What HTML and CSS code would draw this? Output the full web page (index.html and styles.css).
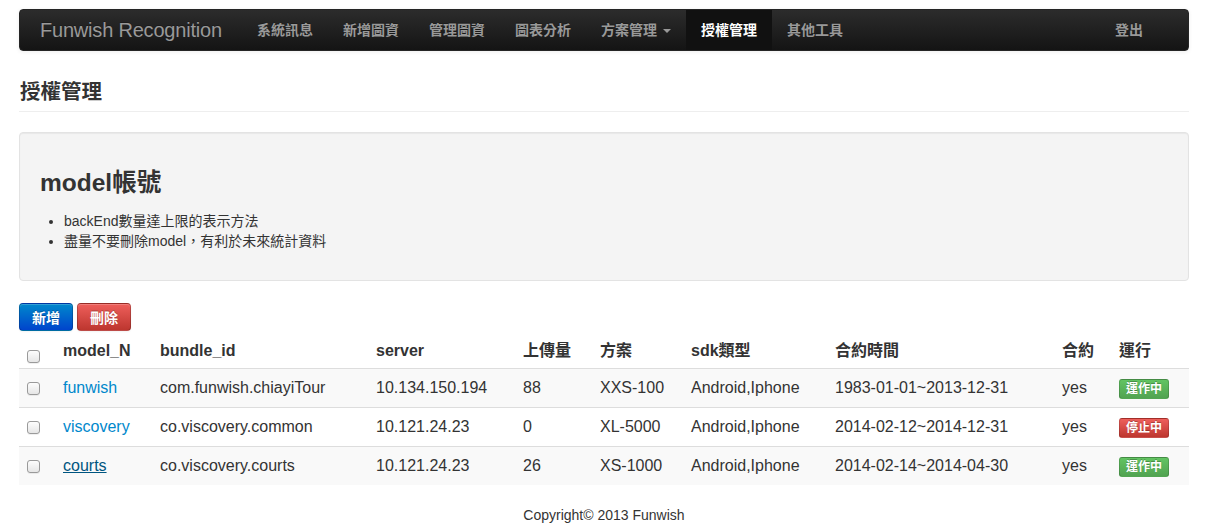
FILE: index.html
```html
<!DOCTYPE html>
<html lang="zh-Hant">
<head>
<meta charset="utf-8">
<title>授權管理</title>
<link rel="stylesheet" href="styles.css">
</head>
<body>
<div class="page">
  <div class="navbar">
    <a class="brand">Funwish Recognition</a>
    <ul class="nav">
      <li><a>系統訊息</a></li>
      <li><a>新增圖資</a></li>
      <li><a>管理圖資</a></li>
      <li><a>圖表分析</a></li>
      <li><a>方案管理 <b class="caret"></b></a></li>
      <li class="active"><a>授權管理</a></li>
      <li><a>其他工具</a></li>
    </ul>
    <ul class="nav nav-right">
      <li><a>登出</a></li>
    </ul>
  </div>

  <div class="page-header"><h3>授權管理</h3></div>

  <div class="well">
    <h2>model帳號</h2>
    <ul class="notes">
      <li>backEnd數量達上限的表示方法</li>
      <li>盡量不要刪除model，有利於未來統計資料</li>
    </ul>
  </div>

  <div class="actions">
    <button class="btn btn-primary">新增</button>
    <button class="btn btn-danger">刪除</button>
  </div>

  <table class="table">
    <colgroup>
      <col class="c-check"><col class="c-model"><col class="c-bundle"><col class="c-server"><col class="c-up"><col class="c-plan"><col class="c-sdk"><col class="c-date"><col class="c-contract"><col class="c-run">
    </colgroup>
    <thead>
      <tr>
        <th><input type="checkbox" class="cb cb-head"></th>
        <th>model_N</th>
        <th>bundle_id</th>
        <th>server</th>
        <th>上傳量</th>
        <th>方案</th>
        <th>sdk類型</th>
        <th>合約時間</th>
        <th>合約</th>
        <th>運行</th>
      </tr>
    </thead>
    <tbody>
      <tr>
        <td><input type="checkbox" class="cb"></td>
        <td><a class="link">funwish</a></td>
        <td>com.funwish.chiayiTour</td>
        <td>10.134.150.194</td>
        <td>88</td>
        <td>XXS-100</td>
        <td>Android,Iphone</td>
        <td>1983-01-01~2013-12-31</td>
        <td>yes</td>
        <td><span class="tag tag-on">運作中</span></td>
      </tr>
      <tr>
        <td><input type="checkbox" class="cb"></td>
        <td><a class="link">viscovery</a></td>
        <td>co.viscovery.common</td>
        <td>10.121.24.23</td>
        <td>0</td>
        <td>XL-5000</td>
        <td>Android,Iphone</td>
        <td>2014-02-12~2014-12-31</td>
        <td>yes</td>
        <td><span class="tag tag-off">停止中</span></td>
      </tr>
      <tr>
        <td><input type="checkbox" class="cb"></td>
        <td><a class="link link-hover">courts</a></td>
        <td>co.viscovery.courts</td>
        <td>10.121.24.23</td>
        <td>26</td>
        <td>XS-1000</td>
        <td>Android,Iphone</td>
        <td>2014-02-14~2014-04-30</td>
        <td>yes</td>
        <td><span class="tag tag-on">運作中</span></td>
      </tr>
    </tbody>
  </table>

  <footer class="footer">Copyright© 2013 Funwish</footer>
</div>
</body>
</html>
```

FILE: styles.css
```css
* { box-sizing: border-box; }
html, body { margin: 0; padding: 0; background: #fff; }
body {
  font-family: "Liberation Sans", Arial, "Noto Sans CJK TC", sans-serif;
  font-size: 14px;
  line-height: 20px;
  color: #333;
}
.page { padding: 9px 24px 0 19px; width: 1213px; }

/* navbar */
.navbar {
  display: flex;
  align-items: stretch;
  height: 42px;
  border: 1px solid #252525;
  border-radius: 4px;
  background: linear-gradient(#2c2c2c, #141414);
  box-shadow: 0 1px 4px rgba(0,0,0,0.07);
}
.brand {
  width: 222px;
  padding: 10px 0 10px 20px;
  font-size: 20px;
  line-height: 20px;
  color: #999;
  white-space: nowrap;
  letter-spacing: -0.2px;
  text-shadow: 0 -1px 0 rgba(0,0,0,0.25);
}
.nav { list-style: none; margin: 0; padding: 0; display: flex; }
.nav li a {
  display: block;
  padding: 10px 15px;
  line-height: 20px;
  font-size: 14px;
  font-weight: bold;
  color: #999;
  text-shadow: 0 -1px 0 rgba(0,0,0,0.25);
}
.nav li.active a { background: #111; color: #fff; }
.nav-right { margin-left: auto; margin-right: 30px; }
.caret {
  display: inline-block;
  width: 0; height: 0;
  margin-left: 2px;
  vertical-align: middle;
  border-top: 4px solid #999;
  border-left: 4px solid transparent;
  border-right: 4px solid transparent;
}

/* page header */
.page-header {
  margin-top: 29px;
  padding-bottom: 7px;
  border-bottom: 1px solid #eee;
}
.page-header h3 {
  margin: 0 0 0 1px;
  font-size: 20.5px;
  line-height: 24px;
  font-weight: bold;
}

/* well */
.well {
  margin-top: 20px;
  height: 149px;
  padding: 35px 20px 0 20px;
  background: #f4f4f4;
  border: 1px solid #e3e3e3;
  border-radius: 4px;
  box-shadow: inset 0 1px 1px rgba(0,0,0,0.05);
}
.well h2 {
  margin: 0;
  font-size: 24.5px;
  line-height: 30px;
  font-weight: bold;
}
.notes {
  margin: 13px 0 0 0;
  padding-left: 24px;
  font-size: 14px;
  line-height: 20px;
}

/* buttons */
.actions { margin-top: 22px; display: flex; gap: 4px; }
.btn {
  height: 28px;
  padding: 0 12px;
  font-family: inherit;
  font-size: 14px;
  font-weight: bold;
  color: #fff;
  border-radius: 4px;
  border: 1px solid rgba(0,0,0,0.2);
  text-shadow: 0 -1px 0 rgba(0,0,0,0.25);
  box-shadow: inset 0 1px 0 rgba(255,255,255,0.2), 0 1px 2px rgba(0,0,0,0.05);
}
.btn-primary { background: linear-gradient(#0088cc, #0044cc); }
.btn-danger { background: linear-gradient(#ee5f5b, #bd362f); }

/* table */
.table {
  margin-top: 2px;
  width: 1170px;
  border-collapse: collapse;
  table-layout: fixed;
  font-size: 16px;
}
.c-check { width: 36px; }
.c-model { width: 97px; }
.c-bundle { width: 216px; }
.c-server { width: 147px; }
.c-up { width: 77px; }
.c-plan { width: 91px; }
.c-sdk { width: 144px; }
.c-date { width: 227px; }
.c-contract { width: 57px; }
.c-run { width: 78px; }
.table th {
  text-align: left;
  font-weight: bold;
  padding: 8px 8px 7px 8px;
  line-height: 20px;
  vertical-align: bottom;
}
.table td {
  padding: 8px;
  line-height: 22px;
  border-top: 1px solid #ddd;
  vertical-align: middle;
  white-space: nowrap;
}
.table tbody tr:nth-child(odd) td { background: #f9f9f9; }

.cb {
  -webkit-appearance: none;
  appearance: none;
  display: block;
  width: 13px; height: 13px;
  margin: 0;
  border: 1px solid #9a9a9a;
  border-radius: 3px;
  background: linear-gradient(#fdfdfd, #e6e6e6);
  box-shadow: 0 1px 0 rgba(0,0,0,0.06);
}
.cb-head { margin-bottom: -2px; }

.link { color: #0088cc; text-decoration: none; }
.link-hover { color: #005580; text-decoration: underline; }

.tag {
  display: inline-block;
  height: 20px;
  padding: 0 6px;
  font-size: 12px;
  line-height: 19px;
  font-weight: bold;
  color: #fff;
  border-radius: 3px;
  border: 1px solid rgba(0,0,0,0.15);
  text-shadow: 0 -1px 0 rgba(0,0,0,0.25);
  vertical-align: middle;
}
.tag-on { background: linear-gradient(#62c462, #51a351); }
.tag-off { background: linear-gradient(#ee5f5b, #bd362f); }

.footer {
  margin-top: 20px;
  text-align: center;
  font-size: 14px;
  line-height: 20px;
}
```
